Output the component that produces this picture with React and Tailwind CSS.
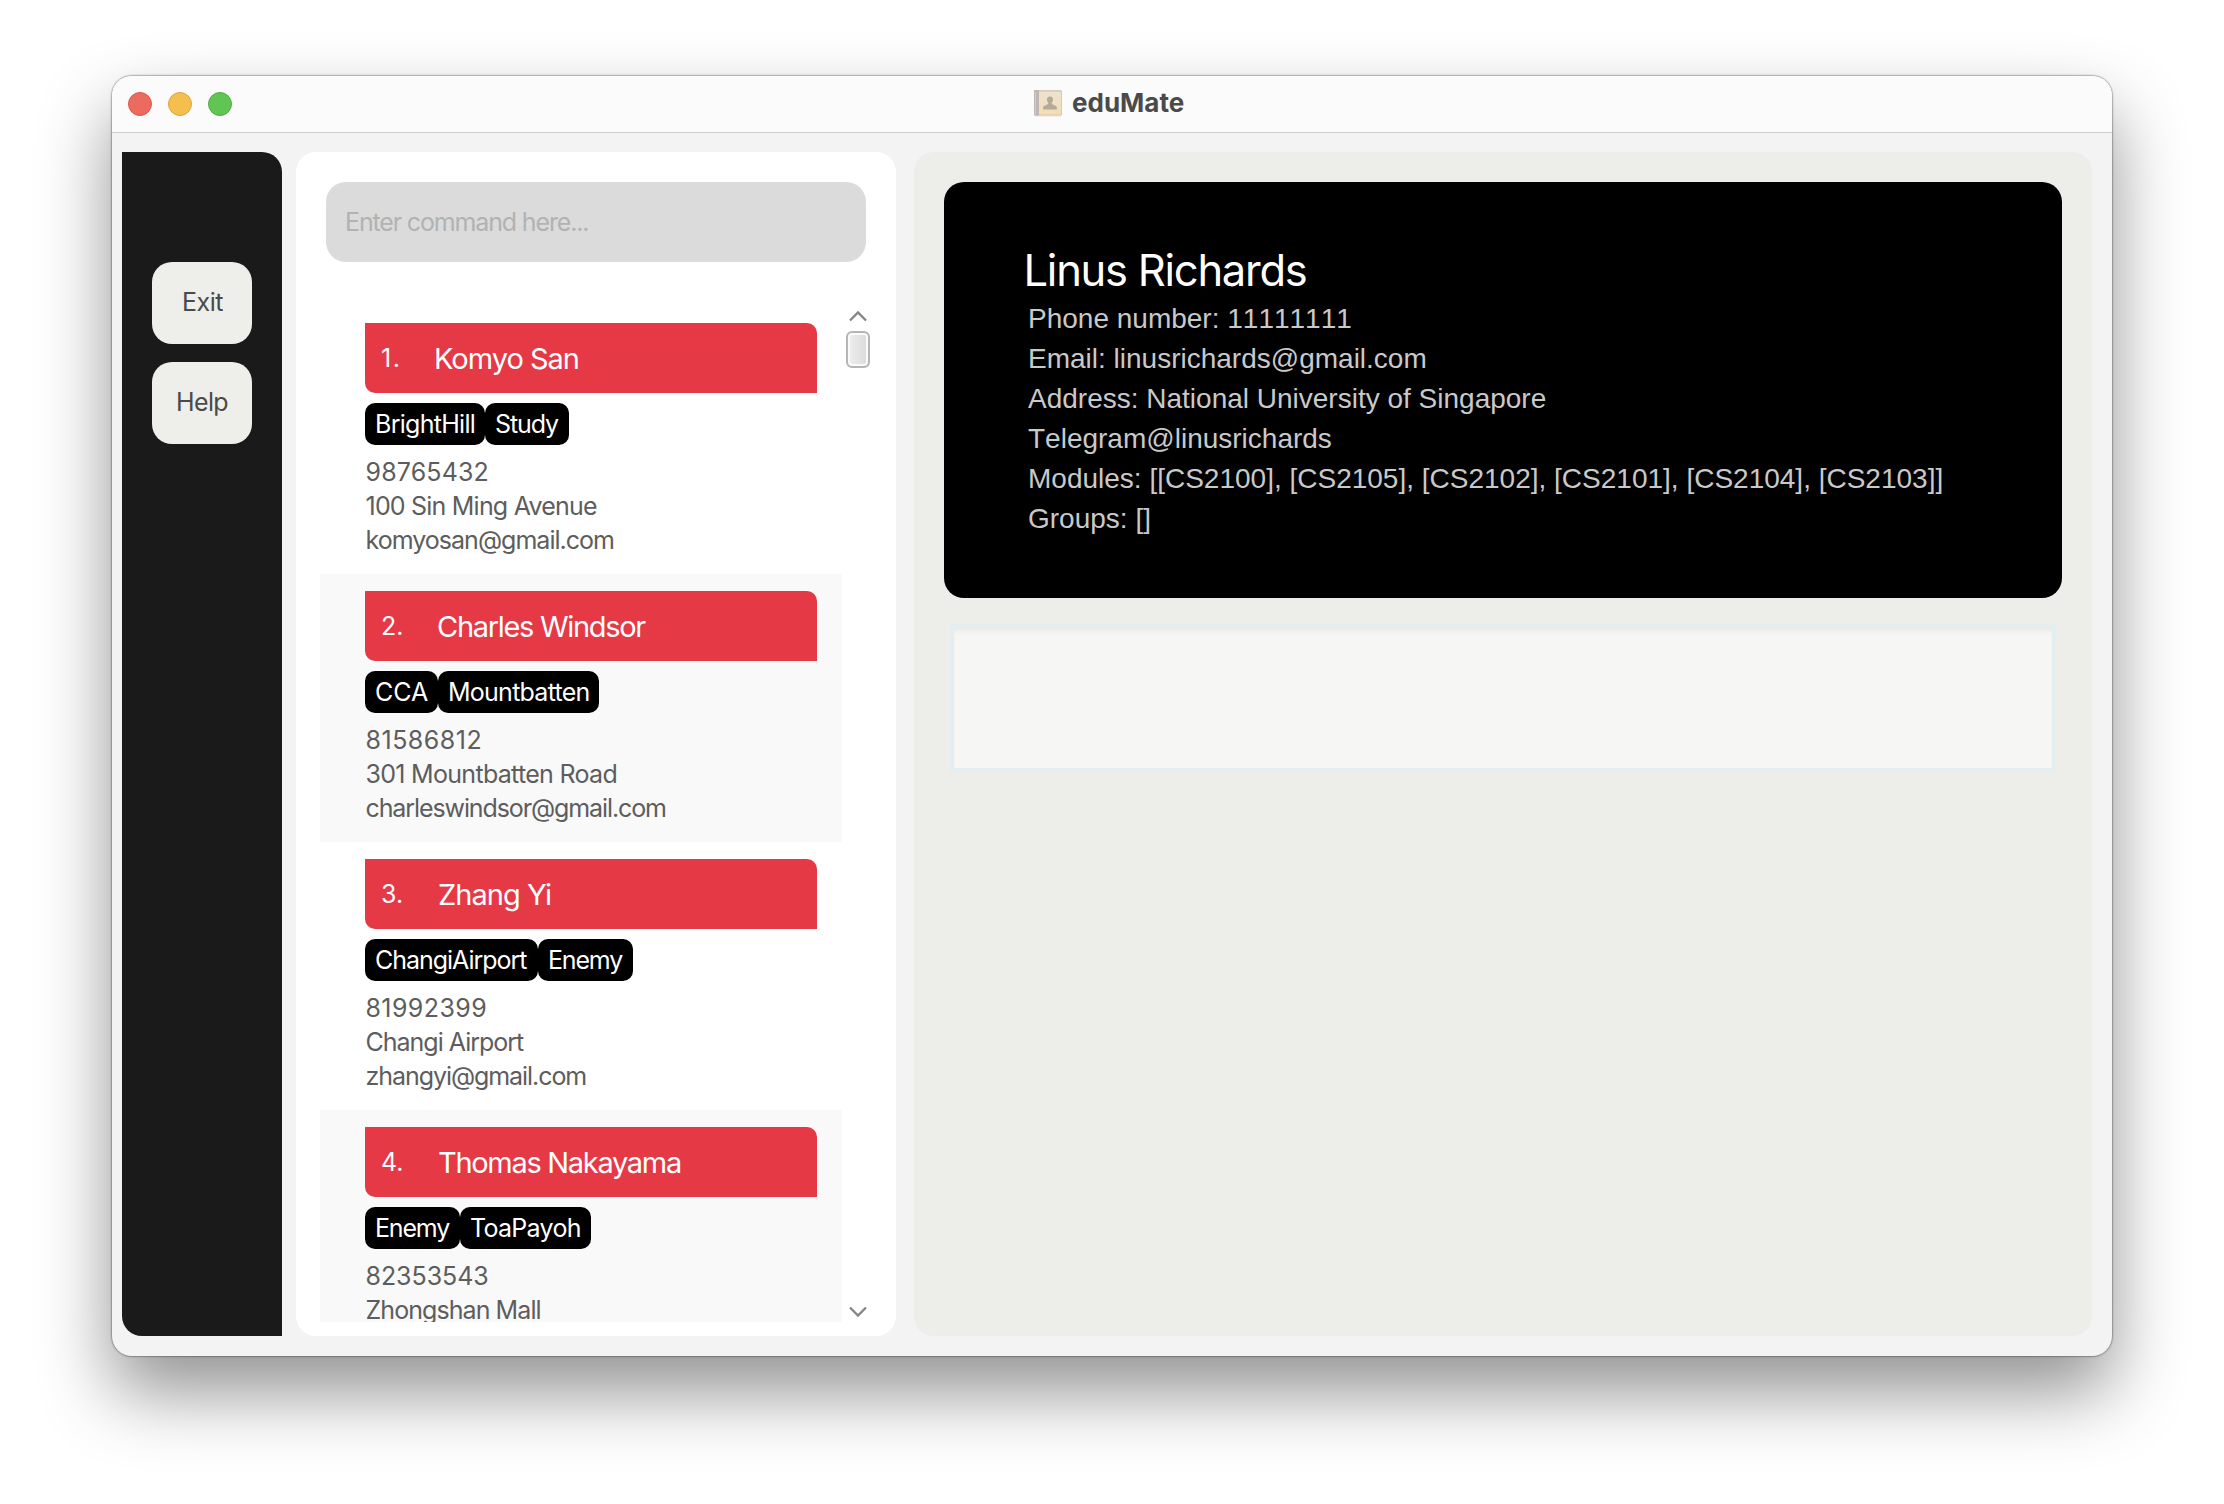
const people = [
  {
    index: { text: "1.", style: "w-[53px] tracking-[1.6px]" },
    name: { text: "Komyo San", style: "tracking-[-1px]" },
    tags: [
      { text: "BrightHill", style: "w-[120px] tracking-[-0.72px]" },
      { text: "Study", style: "w-[84px] tracking-[-1.1px]" },
    ],
    lines: [
      { text: "98765432", style: "tracking-[0.15px]" },
      { text: "100 Sin Ming Avenue", style: "tracking-[-0.79px]" },
      { text: "komyosan@gmail.com", style: "tracking-[-0.98px]" },
    ],
  },
  {
    index: { text: "2.", style: "w-[56px]" },
    name: { text: "Charles Windsor", style: "tracking-[-1.3px]" },
    tags: [
      { text: "CCA", style: "w-[73px]" },
      { text: "Mountbatten", style: "w-[161px] tracking-[-0.75px]" },
    ],
    lines: [
      { text: "81586812", style: "tracking-[0.5px]" },
      { text: "301 Mountbatten Road", style: "tracking-[-0.7px]" },
      { text: "charleswindsor@gmail.com", style: "tracking-[-1.1px]" },
    ],
  },
  {
    index: { text: "3.", style: "w-[57px]" },
    name: { text: "Zhang Yi", style: "tracking-[-0.96px]" },
    tags: [
      { text: "ChangiAirport", style: "w-[173px] tracking-[-1.02px]" },
      { text: "Enemy", style: "w-[95px] tracking-[-1.18px]" },
    ],
    lines: [
      { text: "81992399", style: "tracking-[0.4px]" },
      { text: "Changi Airport", style: "tracking-[-1px]" },
      { text: "zhangyi@gmail.com", style: "tracking-[-1.06px]" },
    ],
  },
  {
    index: { text: "4.", style: "w-[57px]" },
    name: { text: "Thomas Nakayama", style: "tracking-[-1.3px]" },
    tags: [
      { text: "Enemy", style: "w-[95px] tracking-[-1.18px]" },
      { text: "ToaPayoh", style: "w-[131px] tracking-[-0.7px]" },
    ],
    lines: [
      { text: "82353543", style: "tracking-[-0.05px]" },
      { text: "Zhongshan Mall", style: "tracking-[-0.93px]" },
    ],
  },
];

const details = [
  "Phone number: 11111111",
  "Email: linusrichards@gmail.com",
  "Address: National University of Singapore",
  "Telegram@linusrichards",
  "Modules: [[CS2100], [CS2105], [CS2102], [CS2101], [CS2104], [CS2103]]",
  "Groups: []",
];

function BookIcon() {
  return (
    <svg width="28" height="28" viewBox="0 0 28 28" aria-hidden="true">
      <defs>
        <linearGradient id="cover" x1="0" y1="0" x2="0" y2="1">
          <stop offset="0" stopColor="#eee2d0" />
          <stop offset="1" stopColor="#f2deb4" />
        </linearGradient>
      </defs>
      <rect x="0.5" y="1.5" width="27" height="26" rx="1.5" fill="#e9e6e2" />
      <rect x="0" y="1" width="28" height="25.5" rx="1.5" fill="#d9c9ae" />
      <rect x="5" y="2.5" width="22" height="23" rx="0.8" fill="url(#cover)" />
      <rect x="1" y="1" width="26" height="1.6" fill="#d5cbbd" />
      <rect x="0" y="1" width="5" height="25.5" rx="1" fill="#bdb6b2" />
      <rect x="1" y="3" width="1" height="22.5" fill="#d3ccc6" />
      <path
        d="M16 7.500c1.900 0 3 1.200 3 3 0 1.300-.5 2.400-1.200 3.100v1.500c1 .9 4.800 1.200 5.100 3.600v1.800H9.100v-1.800c.3-2.400 4.100-2.700 5.100-3.600v-1.500C13.500 12.900 13 11.800 13 10.500c0-1.800 1.100-3 3-3z"
        fill="#b3aa9c"
      />
    </svg>
  );
}

function Chevron({ d }) {
  return (
    <svg width="20" height="12" viewBox="0 0 20 12" fill="none" stroke="#858585" strokeWidth="2.3" aria-hidden="true">
      <path d={d} />
    </svg>
  );
}

function Person({ person }) {
  return (
    <li className="h-[268px] shrink-0 pt-[17px] pr-[25px] pl-[45px] even:bg-[#f9f9f9]">
      <div className="flex h-[70px] rounded-tr-[10px] rounded-bl-[10px] bg-[#e63946] pl-4 leading-[70px] text-white">
        <span className={`shrink-0 ${person.index.style}`}>{person.index.text}</span>
        <span className={`pt-px text-[29px] ${person.name.style}`}>{person.name.text}</span>
      </div>
      <div className="mt-[10px] flex text-white">
        {person.tags.map((tag) => (
          <span key={tag.text} className={`h-[42px] rounded-[10px] bg-black pl-[10px] leading-[42px] ${tag.style}`}>
            {tag.text}
          </span>
        ))}
      </div>
      <div className="mt-[10px] pl-[0.5px] leading-[34px] text-[#5d5d5d]">
        {person.lines.map((line) => (
          <p key={line.text} className={line.style}>
            {line.text}
          </p>
        ))}
      </div>
    </li>
  );
}

export default function App() {
  return (
    <div className="h-[1504px] w-[2224px] overflow-hidden bg-white pt-[76px] pl-[112px] font-['Inter',sans-serif] text-[25px] whitespace-nowrap">
      <div className="flex h-[1280px] w-[2000px] flex-col overflow-hidden rounded-[20px] bg-[#f3f3f3] shadow-[0_0_1.5px_1px_rgba(0,0,0,0.3),0_36px_72px_rgba(0,0,0,0.43)]">
        <header className="flex h-[57px] shrink-0 border-b border-[#cdcdcd] bg-[#fbfbfb]">
          <div className="flex w-[922px] items-center gap-4 pl-4">
            <span className="size-6 rounded-full border border-[#d9594f] bg-[#ed6a5e]" />
            <span className="size-6 rounded-full border border-[#d9a440] bg-[#f5bf4f]" />
            <span className="size-6 rounded-full border border-[#51ab44] bg-[#61c554]" />
          </div>
          <div className="flex h-[53px] items-center gap-[10px]">
            <BookIcon />
            <h1 className="text-[26px] font-bold text-[#4a4a4a]">eduMate</h1>
          </div>
        </header>

        <div className="flex h-[1203px] pt-[19px] pl-[10px]">
          <nav className="flex h-[1184px] w-[160px] flex-col items-center gap-[18px] rounded-tr-[20px] rounded-bl-[20px] bg-[#1a1a1a] pt-[110px]">
            <button className="h-[82px] w-[100px] rounded-[20px] bg-[#eeefea] pb-[2px] pl-px leading-[80px] tracking-[-0.45px] text-[#4a4a4a]">
              Exit
            </button>
            <button className="h-[82px] w-[100px] rounded-[20px] bg-[#eeefea] pb-[2px] leading-[80px] tracking-[-0.6px] text-[#4a4a4a]">
              Help
            </button>
          </nav>

          <section className="ml-[14px] h-[1184px] w-[600px] rounded-[20px] bg-white pt-[30px]">
            <div className="ml-[30px] h-20 w-[540px] rounded-[20px] bg-[#dbdbdb] pl-[19px] leading-[80px] tracking-[-1.15px] text-[#b2b2b2]">
              Enter command here...
            </div>
            <div className="mt-[44px] ml-6 flex h-[1016px]">
              <ul className="flex w-[522px] flex-col overflow-hidden">
                {people.map((person) => (
                  <Person key={person.index.text} person={person} />
                ))}
              </ul>
              <div className="flex w-8 flex-col items-center pt-[4px] pb-[4px]">
                <Chevron d="M2 10.500 10 2.500 18 10.500" />
                <div className="mt-[9px] h-[37px] w-6 rounded-[6px] border-2 border-[#b5b5b5] bg-linear-to-r from-[#efefef] to-[#dadada] shadow-[inset_0_0_0_2px_#fafafa]" />
                <div className="grow" />
                <Chevron d="M2 1.500 10 9.500 18 1.500" />
              </div>
            </div>
          </section>

          <main className="ml-[18px] h-[1184px] w-[1178px] rounded-[20px] bg-[#edeee9] px-[30px] pt-[30px]">
            <section className="h-[416px] rounded-[20px] bg-black pt-[62px] pl-[79.5px]">
              <h2 className="text-[43.5px] leading-[52px] tracking-[-1.25px] text-white">Linus Richards</h2>
              <div className="mt-[3px] pl-[4.5px] font-['Liberation_Sans',sans-serif] text-[28px] leading-10 text-[#c9c9c9] [font-kerning:none]">
                {details.map((line) => (
                  <p key={line}>{line}</p>
                ))}
              </div>
            </section>
            <div className="mx-[6px] mt-[26px] h-[148px] border-4 border-[#e4edf0] bg-[#f6f6f4] shadow-[inset_0_5px_6px_-3px_rgba(0,0,0,0.07)]" />
          </main>
        </div>
      </div>
    </div>
  );
}
